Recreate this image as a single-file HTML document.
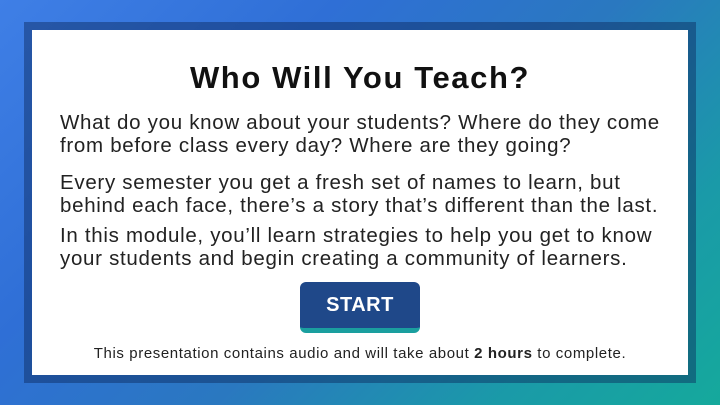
<!DOCTYPE html>
<html><head><meta charset="utf-8"><style>
html,body{margin:0;padding:0}
body{width:720px;height:405px;overflow:hidden;position:relative;font-family:"Liberation Sans",sans-serif;
background:linear-gradient(135deg,#3f7fe6 0%,#2f6fd6 30%,#2a78c0 55%,#1a9aa8 80%,#15a99c 100%);}
.frame{position:absolute;left:24px;top:22px;width:672px;height:361px;background:rgba(10,40,90,0.45);}
.card{position:absolute;left:32px;top:30px;width:656px;height:345px;background:#fff;}
h1{position:absolute;left:0;width:656px;top:30px;margin:0;text-align:center;font-size:31px;letter-spacing:1.6px;font-weight:bold;color:#111;}
.p{position:absolute;left:28px;font-size:20.5px;letter-spacing:0.7px;line-height:23px;color:#222;white-space:nowrap;}
.btn{position:absolute;left:268px;top:252px;width:120px;height:46px;background:#1f4889;border-bottom:5px solid #1a9f9f;border-radius:6px;color:#fff;font-weight:bold;font-size:20px;letter-spacing:0.5px;text-align:center;line-height:46px;}
.foot{position:absolute;left:0;width:656px;top:315px;text-align:center;font-size:15px;letter-spacing:0.6px;color:#222;}
</style></head><body>
<div class="frame"></div>
<div class="card">
<h1>Who Will You Teach?</h1>
<div class="p" style="top:81px">What do you know about your students? Where do they come<br>from before class every day? Where are they going?</div>
<div class="p" style="top:141px">Every semester you get a fresh set of names to learn, but<br>behind each face, there’s a story that’s different than the last.</div>
<div class="p" style="top:194px">In this module, you’ll learn strategies to help you get to know<br>your students and begin creating a community of learners.</div>
<div class="btn">START</div>
<div class="foot">This presentation contains audio and will take about <b>2 hours</b> to complete.</div>
</div>
</body></html>
